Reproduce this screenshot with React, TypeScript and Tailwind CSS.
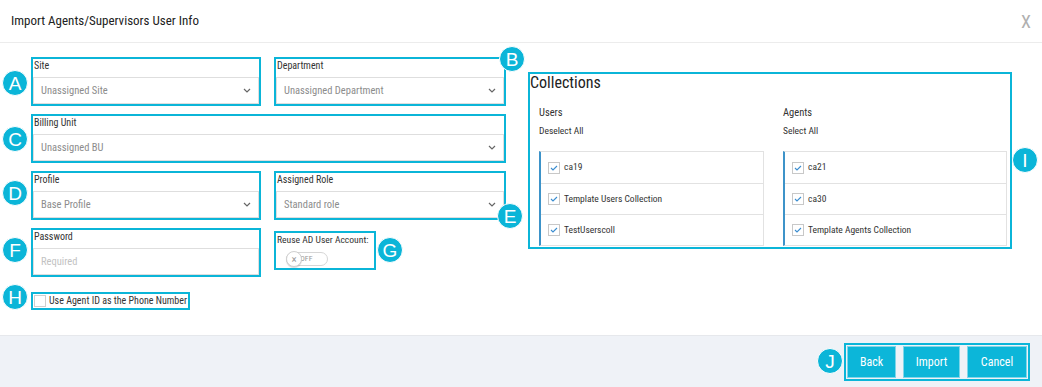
import React from "react";

const FONT = { fontFamily: '"Roboto Condensed", "Liberation Sans Narrow", "DejaVu Sans Condensed", "Liberation Sans", sans-serif' };

function Badge({ letter, className }: { letter: string; className: string }) {
  return (
    <div
      className={`absolute w-[26px] h-[26px] rounded-full bg-[#0bb5d8] border border-white text-white flex items-center justify-center text-[19px] leading-none ${className}`}
      style={{ fontFamily: '"Liberation Sans", Arial, sans-serif' }}
    >
      {letter}
    </div>
  );
}

function Chevron() {
  return (
    <svg width="8" height="5" viewBox="0 0 8 5" className="shrink-0">
      <path d="M1 1l3 3 3-3" fill="none" stroke="#666" strokeWidth="1.2" />
    </svg>
  );
}

function SelectBox({ label, value, className = "" }: { label: string; value: string; className?: string }) {
  return (
    <div className={`border-2 border-[#0bb5d8] flex flex-col ${className}`}>
      <div className="h-[18px] text-[10px] leading-[12px] text-[#333] pl-[1px] pt-[1px]">{label}</div>
      <div className="h-[27px] border border-[#dedede] bg-white flex items-center justify-between pl-[7px] pr-[7px]">
        <span className="text-[10.5px] text-[#8c8c8c]">{value}</span>
        <Chevron />
      </div>
    </div>
  );
}

function CheckIcon() {
  return (
    <div className="w-[12px] h-[12px] border border-[#c8c8c8] bg-white flex items-center justify-center shrink-0">
      <svg width="8" height="6" viewBox="0 0 8 6">
        <path d="M1 3l2 2 4-4" fill="none" stroke="#3c8ed0" strokeWidth="1.1" />
      </svg>
    </div>
  );
}

function List({ items }: { items: string[] }) {
  return (
    <div className="border border-[#e2e2e2] border-l-2 border-l-[#3d93c9] bg-white">
      {items.map((it, i) => (
        <div
          key={it}
          className={`h-[31px] flex items-center gap-[4px] pl-[7px] text-[9.5px] text-[#333] ${i > 0 ? "border-t border-[#e2e2e2]" : ""}`}
        >
          <CheckIcon />
          <span>{it}</span>
        </div>
      ))}
    </div>
  );
}

export default function App() {
  return (
    <div className="w-[1042px] h-[387px] bg-white relative flex flex-col overflow-hidden" style={FONT}>
      {/* Header */}
      <div className="h-[43px] shrink-0 border-b border-[#ececec] flex items-center justify-between pl-[11px] pr-[11px]">
        <span className="text-[13px] text-[#222]">Import Agents/Supervisors User Info</span>
        <span className="text-[18px] text-[#b0b0b0]">X</span>
      </div>

      {/* Body */}
      <div className="flex-1 flex pl-[31px] pt-[14px]">
        <div className="w-[475px] flex flex-col">
          <div className="flex gap-[13px]">
            <SelectBox label="Site" value="Unassigned Site" className="w-[230px]" />
            <SelectBox label="Department" value="Unassigned Department" className="w-[232px]" />
          </div>
          <SelectBox label="Billing Unit" value="Unassigned BU" className="w-[475px] mt-[8px]" />
          <div className="flex gap-[13px] mt-[8px]">
            <SelectBox label="Profile" value="Base Profile" className="w-[230px]" />
            <SelectBox label="Assigned Role" value="Standard role" className="w-[232px]" />
          </div>
          <div className="flex gap-[13px] mt-[8px] items-start">
            <div className="w-[230px] border-2 border-[#0bb5d8] flex flex-col">
              <div className="h-[18px] text-[10px] leading-[12px] text-[#333] pl-[1px] pt-[1px]">Password</div>
              <div className="h-[27px] border border-[#dedede] bg-white flex items-center pl-[7px]">
                <span className="text-[10.5px] text-[#c2c2c2]">Required</span>
              </div>
            </div>
            <div className="w-[102px] h-[39px] mt-[3px] border-2 border-[#0bb5d8] flex flex-col">
              <div className="text-[9.6px] leading-[12px] text-[#333] pl-[1px] pt-[1px] whitespace-nowrap">Reuse AD User Account:</div>
              <div className="pl-[10px] pt-[6px]">
                <div className="w-[42px] h-[14px] rounded-full border border-[#d6d6d6] bg-white relative flex items-center">
                  <span className="text-[8px] text-[#999] pl-[13px] leading-none">OFF</span>
                  <div className="absolute left-[-1px] top-[-2px] w-[16px] h-[16px] rounded-full bg-white border border-[#d0d0d0] shadow-[0_1px_1px_rgba(0,0,0,0.15)] flex items-center justify-center text-[11px] text-[#999] leading-none">
                    ×
                  </div>
                </div>
              </div>
            </div>
          </div>
          <div className="mt-[15px] w-[159px] h-[18px] border-2 border-[#0bb5d8] flex items-center gap-[3px] pl-[1px]">
            <div className="w-[12px] h-[12px] border border-[#cfcfcf] bg-white shrink-0" />
            <span className="text-[10px] text-[#333] leading-none whitespace-nowrap">Use Agent ID as the Phone Number</span>
          </div>
        </div>

        <div className="ml-[22px] mt-[15px] w-[484px] h-[177px] border-2 border-[#0bb5d8] flex flex-col">
          <div className="text-[16px] text-[#222] leading-[18px] pt-[0px] pl-[0px]">Collections</div>
          <div className="grid grid-cols-[225px_224px] gap-[19px] pl-[9px] mt-[11px]">
            <div className="flex flex-col">
              <div className="text-[10.5px] text-[#333] h-[19px] flex items-center">Users</div>
              <div className="text-[9.5px] text-[#333] h-[19px] flex items-center">Deselect All</div>
              <div className="mt-[10px]">
                <List items={["ca19", "Template Users Collection", "TestUserscoll"]} />
              </div>
            </div>
            <div className="flex flex-col">
              <div className="text-[10.5px] text-[#333] h-[19px] flex items-center">Agents</div>
              <div className="text-[9.5px] text-[#333] h-[19px] flex items-center">Select All</div>
              <div className="mt-[10px]">
                <List items={["ca21", "ca30", "Template Agents Collection"]} />
              </div>
            </div>
          </div>
        </div>
      </div>

      {/* Footer */}
      <div className="h-[52px] shrink-0 bg-[#eff2f7] border-t border-[#e6e8ec] flex items-center justify-end pr-[12px]">
        <div className="border-2 border-[#0bb5d8] p-[1px] flex gap-[7px]">
          {[
            ["Back", "w-[49px]"],
            ["Import", "w-[57px]"],
            ["Cancel", "w-[60px]"],
          ].map(([t, w]) => (
            <div
              key={t}
              className={`${w} h-[32px] bg-[#0cb6d9] border border-[#7fd6e9] text-white text-[12px] flex items-center justify-center`}
            >
              {t}
            </div>
          ))}
        </div>
      </div>

      <Badge letter="A" className="left-[2px] top-[70px]" />
      <Badge letter="B" className="left-[499px] top-[46px]" />
      <Badge letter="C" className="left-[2px] top-[126px]" />
      <Badge letter="D" className="left-[2px] top-[180px]" />
      <Badge letter="E" className="left-[497px] top-[203px]" />
      <Badge letter="F" className="left-[2px] top-[237px]" />
      <Badge letter="G" className="left-[377px] top-[237px]" />
      <Badge letter="H" className="left-[2px] top-[284px]" />
      <Badge letter="I" className="left-[1012px] top-[147px]" />
      <Badge letter="J" className="left-[817px] top-[348px]" />
    </div>
  );
}
